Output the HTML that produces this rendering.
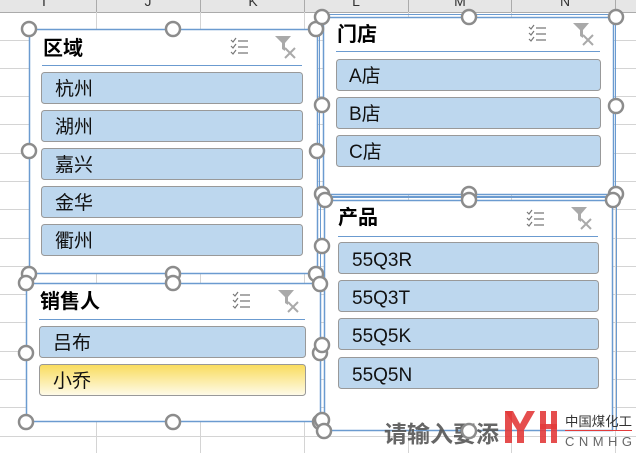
<!DOCTYPE html>
<html><head><meta charset="utf-8"><style>
html,body{margin:0;padding:0;width:636px;height:453px;overflow:hidden;background:#fff}
svg{display:block}
text{font-family:"Liberation Sans","Noto Sans CJK SC",sans-serif}
</style></head><body>
<svg width="636" height="453" viewBox="0 0 636 453" xmlns="http://www.w3.org/2000/svg">
<defs>
<linearGradient id="yel" x1="0" y1="0" x2="0" y2="1"><stop offset="0" stop-color="#f9dc5c"/><stop offset="1" stop-color="#fefbea"/></linearGradient>
<g id="chk" fill="none" stroke="#777" stroke-width="1.2">
<path d="M0 2l2 2 3-4M0 8l2 2 3-4M0 14l2 2 3-4"/><path d="M7 3h10M7 9h10M7 15h10"/>
</g>
<g id="fun">
<path d="M0 0h16l-6 7v8l-3-2v-6z" fill="#a9a9a9"/>
<path d="M10 12l10 10M20 12l-10 10" stroke="#a9a9a9" stroke-width="2"/>
</g>
</defs>
<rect x="0" y="0" width="636" height="12" fill="#e6e6e6"/>
<line x1="0" y1="12.5" x2="636" y2="12.5" stroke="#ababab"/>
<g stroke="#d4d4d4" stroke-width="1">
<line x1="96.5" y1="0" x2="96.5" y2="453"/><line x1="200.5" y1="0" x2="200.5" y2="453"/><line x1="304.5" y1="0" x2="304.5" y2="453"/><line x1="408.5" y1="0" x2="408.5" y2="453"/><line x1="511.5" y1="0" x2="511.5" y2="453"/><line x1="615.5" y1="0" x2="615.5" y2="453"/>
<line x1="0" y1="40.5" x2="636" y2="40.5"/><line x1="0" y1="68.5" x2="636" y2="68.5"/><line x1="0" y1="96.5" x2="636" y2="96.5"/><line x1="0" y1="124.5" x2="636" y2="124.5"/><line x1="0" y1="153.5" x2="636" y2="153.5"/><line x1="0" y1="181.5" x2="636" y2="181.5"/><line x1="0" y1="209.5" x2="636" y2="209.5"/><line x1="0" y1="238.5" x2="636" y2="238.5"/><line x1="0" y1="266.5" x2="636" y2="266.5"/><line x1="0" y1="294.5" x2="636" y2="294.5"/><line x1="0" y1="322.5" x2="636" y2="322.5"/><line x1="0" y1="351.5" x2="636" y2="351.5"/><line x1="0" y1="379.5" x2="636" y2="379.5"/><line x1="0" y1="407.5" x2="636" y2="407.5"/><line x1="0" y1="436.5" x2="636" y2="436.5"/>
</g>
<g stroke="#ababab"><line x1="96.5" y1="0" x2="96.5" y2="12"/><line x1="200.5" y1="0" x2="200.5" y2="12"/><line x1="304.5" y1="0" x2="304.5" y2="12"/><line x1="408.5" y1="0" x2="408.5" y2="12"/><line x1="511.5" y1="0" x2="511.5" y2="12"/><line x1="615.5" y1="0" x2="615.5" y2="12"/></g>
<g font-size="14" fill="#333" text-anchor="middle"><text x="44" y="6">I</text><text x="148" y="6">J</text><text x="253" y="6">K</text><text x="356" y="6">L</text><text x="460" y="6">M</text><text x="565" y="6">N</text></g>

<!-- slicer 区域 -->
<rect x="29.5" y="29.5" width="288" height="244" fill="#fff" stroke="#6b9bd0" stroke-width="1.5"/>
<text x="43" y="55" font-size="20" font-weight="bold" fill="#000">区域</text>
<use href="#chk" x="231" y="38"/><use href="#fun" x="275" y="36"/>
<line x1="42" y1="65.5" x2="302" y2="65.5" stroke="#6b9bd0"/>
<g fill="#bdd7ee" stroke="#999"><rect x="41.5" y="72.5" width="261" height="31" rx="3"/><rect x="41.5" y="110.5" width="261" height="31" rx="3"/><rect x="41.5" y="148.5" width="261" height="31" rx="3"/><rect x="41.5" y="186.5" width="261" height="31" rx="3"/><rect x="41.5" y="224.5" width="261" height="31" rx="3"/></g>
<g font-size="19" fill="#111"><text x="55" y="95">杭州</text><text x="55" y="133">湖州</text><text x="55" y="171">嘉兴</text><text x="55" y="209">金华</text><text x="55" y="247">衢州</text></g>

<!-- slicer 门店 -->
<rect x="323.5" y="17.5" width="290" height="177" fill="#fff" stroke="#6b9bd0" stroke-width="1.5"/>
<rect x="319.5" y="14.5" width="296" height="183" fill="none" stroke="#6b9bd0" stroke-width="1"/>
<text x="337" y="41" font-size="20" font-weight="bold" fill="#000">门店</text>
<use href="#chk" x="529" y="25"/><use href="#fun" x="573" y="23"/>
<line x1="336" y1="51.5" x2="600" y2="51.5" stroke="#6b9bd0"/>
<g fill="#bdd7ee" stroke="#999"><rect x="336.5" y="59.5" width="264" height="31" rx="3"/><rect x="336.5" y="97.5" width="264" height="31" rx="3"/><rect x="336.5" y="135.5" width="264" height="31" rx="3"/></g>
<g font-size="19" fill="#111"><text x="349" y="82">A店</text><text x="349" y="120">B店</text><text x="349" y="158">C店</text></g>

<!-- slicer 产品 -->
<rect x="324.5" y="200.5" width="288" height="230" fill="#fff" stroke="#6b9bd0" stroke-width="1.5"/>
<rect x="320.5" y="196.5" width="296" height="234" fill="none" stroke="#6b9bd0" stroke-width="1"/>
<text x="338" y="224" font-size="20" font-weight="bold" fill="#000">产品</text>
<use href="#chk" x="527" y="210"/><use href="#fun" x="571" y="207"/>
<line x1="338" y1="236.5" x2="598" y2="236.5" stroke="#6b9bd0"/>
<g fill="#bdd7ee" stroke="#999"><rect x="338.5" y="242.5" width="260" height="31" rx="3"/><rect x="338.5" y="280.5" width="260" height="31" rx="3"/><rect x="338.5" y="318.5" width="260" height="31" rx="3"/><rect x="338.5" y="357.5" width="260" height="31" rx="3"/></g>
<g font-size="19" fill="#111"><text x="352" y="266">55Q3R</text><text x="352" y="304">55Q3T</text><text x="352" y="342">55Q5K</text><text x="352" y="381">55Q5N</text></g>

<!-- slicer 销售人 -->
<rect x="26.5" y="283.5" width="294" height="138" fill="#fff" stroke="#6b9bd0" stroke-width="1.5"/>
<text x="40" y="308" font-size="20" font-weight="bold" fill="#000">销售人</text>
<use href="#chk" x="233" y="292"/><use href="#fun" x="278" y="290"/>
<line x1="39" y1="319.5" x2="305" y2="319.5" stroke="#6b9bd0"/>
<rect x="39.5" y="326.5" width="266" height="31" rx="3" fill="#bdd7ee" stroke="#999"/>
<rect x="39.5" y="364.5" width="266" height="31" rx="3" fill="url(#yel)" stroke="#999"/>
<g font-size="19" fill="#111"><text x="53" y="349">吕布</text><text x="53" y="387">小乔</text></g>

<!-- text on top -->
<text x="384" y="442" font-size="23" font-weight="bold" fill="#555" fill-opacity="0.9">请输入要添</text>

<!-- handles -->
<g fill="#fff" stroke="#8c8c8c" stroke-width="2.5">
<circle cx="29" cy="29" r="7"/><circle cx="173" cy="29" r="7"/><circle cx="316" cy="29" r="7"/>
<circle cx="29" cy="151" r="7"/><circle cx="317" cy="151" r="7"/>
<circle cx="29" cy="274" r="7"/><circle cx="173" cy="274" r="7"/><circle cx="316" cy="274" r="7"/>
<circle cx="26" cy="283" r="7"/><circle cx="173" cy="283" r="7"/><circle cx="320" cy="284" r="7"/>
<circle cx="26" cy="353" r="7"/><circle cx="320" cy="353" r="7"/>
<circle cx="26" cy="422" r="7"/><circle cx="173" cy="422" r="7"/><circle cx="320" cy="422" r="7"/>
<circle cx="322" cy="17" r="7"/><circle cx="469" cy="17" r="7"/><circle cx="616" cy="17" r="7"/>
<circle cx="322" cy="105" r="7"/><circle cx="616" cy="106" r="7"/>
<circle cx="322" cy="194" r="7"/><circle cx="469" cy="194" r="7"/><circle cx="616" cy="194" r="7"/>
<circle cx="325" cy="200" r="7"/><circle cx="469" cy="200" r="7"/><circle cx="613" cy="200" r="7"/>
<circle cx="322" cy="246" r="7"/>
<circle cx="322" cy="345" r="7"/>
<circle cx="322" cy="420" r="7"/><circle cx="324" cy="431" r="7"/><circle cx="469" cy="431" r="7"/>
</g>

<!-- logo -->
<g fill="#e23b3b" fill-opacity="0.9">
<rect x="505" y="411" width="7" height="32"/><path d="M505 411h8l7 13 7-13h8l-11 19v13h-7v-13z"/>
<rect x="540" y="411" width="6" height="32"/><rect x="551" y="411" width="6" height="32"/><rect x="540" y="424" width="17" height="5"/>
</g>
<text x="565" y="426" font-size="13" fill="#333" textLength="67" lengthAdjust="spacingAndGlyphs">中国煤化工</text>
<line x1="565" y1="430.5" x2="632" y2="430.5" stroke="#e23b3b"/>
<text x="565" y="446" font-size="13" fill="#666" textLength="67" lengthAdjust="spacing">CNMHG</text>
</svg>
</body></html>
